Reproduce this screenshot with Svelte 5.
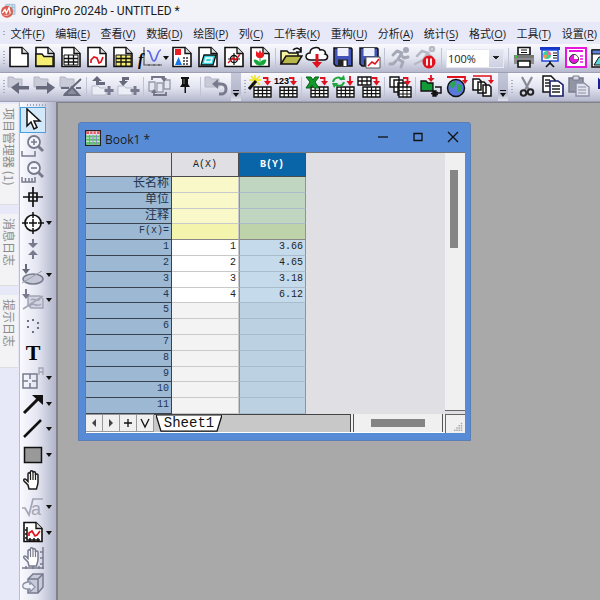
<script>
	const page = '<path d="M3 1.5h12l6 6v13H3z" fill="#fff" stroke="#111" stroke-width="1.6"/><path d="M15 1.5v6h6" fill="#ddd" stroke="#111" stroke-width="1.4"/>';
	const grid = '<path d="M6 12h17v10H6z" fill="#fff" stroke="#111" stroke-width="1.4"/><path d="M6 15.300h17M6 18.700h17M10.200 12v10M14.500 12v10M18.800 12v10" stroke="#111" stroke-width="1.2"/>';
	const drop = '<path d="M15 3h4.500v4" fill="none" stroke="#e0101c" stroke-width="1.800"/><path d="M16 6h7l-3.500 4.500z" fill="#e0101c"/>';
	const folder = '<path d="M1 2h5l2 2h7v8H1z" fill="#c9ccd8" stroke="#b2b5c4"/>';
	const lens = '<circle cx="13" cy="8" r="6" fill="#f4f5fc" stroke="#777b8d" stroke-width="1.800"/><path d="M17 12l5 5" stroke="#777b8d" stroke-width="3"/>';
	const hand = '<path d="M8 20l-1-4-4-4c-1-2 1-2.500 2-1.500l2 2V5c0-1.800 2.300-1.800 2.300 0v-2c0-1.800 2.700-1.800 2.700 0v1c0-1.800 2.500-1.500 2.500 0v2c0-1.500 2.500-1.500 2.500 0v7c0 3-1 4-1.500 7z" fill="#fff" stroke="currentColor" stroke-width="1.5"/><path d="M9.500 5v6M12 4v7M14.500 5v6" stroke="currentColor" stroke-width="1.200"/>';
	const floppy = '<path d="M3 2h17l1 1v17H5l-2-2z" fill="#4355b8" stroke="#111" stroke-width="1.500"/><path d="M6.500 2h11v8h-11z" fill="#eef0fa"/><path d="M7 13.500h10V20H7z" fill="#222"/><path d="M12.500 14.500h3V20h-3z" fill="#fff"/>';
	const chart = '<path d="M6 17v-3l3-3 3 1 2 5 2-1 2-5" fill="none" stroke="#e0101c" stroke-width="1.700"/>';

	const icons = {
		logo: '<path d="M7 2h14v15H7z" fill="#c9dfed" stroke="#8fb3cb"/><path d="M7 7h14M7 12h14M12 2v15M17 2v15" stroke="#8fb3cb"/><circle cx="9" cy="13" r="9" fill="#d95b50"/><path d="M2 15l4-5 2 5 4-8 2 9" fill="none" stroke="#fff" stroke-width="2"/><path d="M4 18c5 2 9 0 11-4" fill="none" stroke="#f6b6aa" stroke-width="1.5"/>',
		blank: page,
		newFolder: page + '<path d="M3 8h6l2 2.500h9V20H3z" fill="#f5ee72" stroke="#111" stroke-width="1.300"/>',
		newBook: page + '<path d="M5 9h14v10H5z" fill="#fff" stroke="#111"/><path d="M5 12.500h14M5 16h14M9.500 9v10M14.500 9v10" stroke="#111" stroke-width="1.300"/>',
		newGraph: page + chart,
		newMatrix: page + '<path d="M5 9h15v11H5z" fill="#f5ee72" stroke="#111"/><path d="M5 12.500h15M5 16h15M10 9v11M15 9v11" stroke="#111" stroke-width="1.300"/>',
		func: '<path d="M6 1v18h18M5 5h2M5 9h2M11 18v2M16 18v2M21 18v2" fill="none" stroke="#555" stroke-width="1.200"/><text x="0" y="19" font-family="Liberation Serif,serif" font-style="italic" font-weight="bold" font-size="16">f</text><path d="M9 5c4-2 4 10 7 10s3-11 7-11" fill="none" stroke="#5968e8" stroke-width="1.700"/>',
		layout: page + '<path d="M5 3h6v6H5z" fill="#ee1c24"/><path d="M5 19l3.500-8 3.500 8z" fill="#1677e8"/><path d="M13 12h6M13 15h6M13 18h6M14 11v8M17 11v8" stroke="#333" stroke-dasharray="2 1"/>',
		notes: page + '<path d="M8 9h12l-3 10H5z" fill="#38d5df" stroke="#111" stroke-width="1.300"/><path d="M10 12h6l-1 4H9z" fill="none" stroke="#fff" stroke-width="1.500"/>',
		digitize: page + '<circle cx="12" cy="13" r="3.500" fill="none" stroke="#111" stroke-width="1.300"/><path d="M12 7v12M6 13h12" stroke="#111" stroke-width="1.200"/><path d="M6 17l5-5 3 2 4-6" fill="none" stroke="#e0101c" stroke-width="1.400"/>',
		image: page + '<path d="M12 12v8M12 19c-4 0-5-2-6-5 4 0 5 2 6 4 1-3 2-4 6-4-1 4-2 5-6 5z" fill="#13a538" stroke="#13a538"/><path d="M8 5l2.500 2L12 4l1.500 3L16 5v5l-2 2h-4l-2-2z" fill="#ee1c24"/>',
		open: '<path d="M2 18V5h6l2 2h9v3" fill="#f7f3a0" stroke="#111" stroke-width="1.500"/><path d="M2 18l5-8h16l-5 8z" fill="#b8b74a" stroke="#111" stroke-width="1.500"/><path d="M14 4c3-3 6-2 8 1M22 1v5h-5" fill="none" stroke="#111" stroke-width="1.600"/>',
		cloud: '<path d="M6 14c-7 0-6-7-1-7 0-6 9-7 10-3 5-1 6 3 5 4 4 1 3 6-1 6z" fill="#fff" stroke="#111" stroke-width="1.500"/><path d="M10.500 8h3v8H17l-5 6-5-6h3.500z" fill="#e0101c"/>',
		save: floppy,
		saveTpl: floppy + '<path d="M9 11h14v11H9z" fill="#fff" stroke="#555"/><path d="M11 20l4-4 3 2 4-5" fill="none" stroke="#e0101c" stroke-width="1.600"/>',
		run: '<g fill="none" stroke="#a5a8b5" stroke-width="3" stroke-linecap="round" stroke-linejoin="round"><circle cx="18" cy="4" r="1.500"/><path d="M5 9l4-4 5 2-4 6 5 3-2 5M13 9l3 3 4-1M8 15l-3 3H2"/></g>',
		pause: '<g fill="none" stroke="#b7b9c4" stroke-width="2.500" stroke-linecap="round"><circle cx="18" cy="3" r="2"/><path d="M3 10l5-5 6 2-5 7-8 4M14 8l4 3"/></g><circle cx="15" cy="16" r="6.500" fill="#e0101c"/><path d="M13 12.500v7M17 12.500v7" stroke="#fff" stroke-width="1.800"/>',
		print: '<path d="M2 9h20v9H2z" fill="#8b8d91"/><path d="M6 1.500h12V9H6zM6 15h12v6H6z" fill="#fff" stroke="#111" stroke-width="1.600"/><path d="M9 4h6M9 6.500h6" stroke="#111"/><path d="M2 9h20v3H2z" fill="#777"/><path d="M3 9.500h2v2H3z" fill="#1ee51e"/>',
		slides: '<path d="M2 1h20v3H2z" fill="#1736c4"/><path d="M4 4h16v11H4z" fill="#fff" stroke="#1f48e0" stroke-width="1.500"/><circle cx="9" cy="9" r="4" fill="#3fcf9b"/><path d="M9 9V5a4 4 0 0 1 4 4z" fill="#f69"/><path d="M9 9H5a4 4 0 0 0 3 4z" fill="#f93"/><path d="M15 7h4M15 9.500h4M15 12h4" stroke="#111"/><path d="M12 15v3M8 21l4-4 4 4" fill="none" stroke="#111" stroke-width="1.600"/>',
		themes: '<path d="M2 2h20v19H2z" fill="#fff" stroke="#e815dd" stroke-width="2"/><path d="M5 5h14" stroke="#e815dd" stroke-width="2"/><circle cx="10" cy="13" r="4.500" fill="#e815dd" stroke="#333"/><path d="M10 13V9a4 4 0 0 1 4 4z" fill="#fff"/><path d="M16 10h3M16 13h3M16 16h3" stroke="#e815dd" stroke-width="1.500"/>',
		panel: '<path d="M2 4h20v17H2z" fill="#fff" stroke="#111" stroke-width="1.500"/><path d="M2 4h20v4H2z" fill="#5c81de" stroke="#111"/><path d="M4 19l5-8h13v8z" fill="#57d6dc" stroke="#111"/>',
		back: folder + '<path d="M12 7v4h10v3.500H12V19l-8-6.500z" fill="#666a7c"/>',
		forward: folder + '<path d="M14 7v4H3v3.500h11V19l8-6.500z" fill="#666a7c"/>',
		noFolder: folder + '<path d="M2 13h8M17 13h5M6 20h14l-7-8zM5 20L22 4" stroke="#666a7c" stroke-width="2" fill="#8a8d9b"/>',
		up: '<path d="M2 11h6l2 2h6v7H2z" fill="#eceef5" stroke="#b9bccb"/><path d="M7 1L2 6h4v4h9V7H9V6h3z" fill="#666a7c"/><path d="M19 11v9M14.500 15.500h9" stroke="#777b8d" stroke-width="3"/>',
		down: '<path d="M2 11h6l2 2h6v7H2z" fill="#eceef5" stroke="#b9bccb"/><path d="M13 2H6v4H3l4 5 5-5H9V5h4z" fill="#666a7c"/><path d="M19 11v9M14.500 15.500h9" stroke="#777b8d" stroke-width="3"/>',
		refresh: '<path d="M2 7h6v9H2zM10 8h6v9h-6zM17 5h6v9h-6z" fill="#e5e7f0" stroke="#969aab" stroke-width="1.300"/><path d="M5 5V2h12v3M19 17v3H7v-3" fill="none" stroke="#717587" stroke-width="1.800"/><path d="M14 3h6l-3 4zM4 18l3-4 3 4z" fill="#717587"/>',
		pin: '<path d="M8 2h8v2h-1v5l2 3h-4v6h-1.500v-6H7l2-3V4H8z" fill="#111"/><path d="M11 4v5" stroke="#777"/>',
		undo: folder + '<path d="M12 9h5c4 0 5 2 5 5s-2 5-4 5h-3" fill="none" stroke="#777b8d" stroke-width="3"/><path d="M14 4v10L8 9z" fill="#777b8d"/>',
		wand: grid + drop + '<path d="M7 0v11M1 5h12M3 1l9 9M12 1L3 9" stroke="#efe51a" stroke-width="1.500"/><path d="M1 14l7-8" stroke="#111" stroke-width="3"/>',
		numbers: grid + drop + '<text x="0" y="9" font-family="Liberation Sans,sans-serif" font-weight="bold" font-size="9">123</text>',
		excel: grid + drop + '<path d="M1 2h5l2 3 2-3h4l-4 5 4 6h-5l-2-3-2 3H1l4-6z" fill="#129a28" stroke="#06621a"/>',
		recalc: grid + '<path d="M2 7c1-5 7-6 9-2M13 7c-1 4-6 5-9 2" fill="none" stroke="#20a640" stroke-width="2"/><path d="M8 5h6l-1-5zM7 8H1l2 5z" fill="#20a640"/><path d="M19 1v7" stroke="#e0101c" stroke-width="1.800"/><path d="M15.500 6h7L19 11z" fill="#e0101c"/>',
		transpose: grid + '<path d="M1 2h13v8H1z" fill="#fff" stroke="#111" stroke-width="1.400"/><path d="M1 6h13M5 2v8M10 2v8" stroke="#111" stroke-width="1.300"/>' + drop,
		copies: '<path d="M2 2h9v10H2zM6 5h9v12H6zM10 8h9v12h-9z" fill="#fff" stroke="#111" stroke-width="1.400"/><path d="M11 12h12v10H11z" fill="#fff" stroke="#111" stroke-width="1.400"/><path d="M11 15.500h12M11 19h12M15 12v10M19 12v10" stroke="#111"/>' + drop,
		connect: '<path d="M2 6h5l2 2h5v8H2z" fill="#129a38" stroke="#111" stroke-width="1.300"/><path d="M12 0v4" stroke="#e0101c" stroke-width="1.800"/><path d="M8.500 3h7L12 7z" fill="#e0101c"/><path d="M16 12h6v6h-4" fill="none" stroke="#111" stroke-width="1.500"/><path d="M14 16h3v5h-3zM12 18.500h2M17 17.500h2M17 19.500h2" fill="#111" stroke="#111" stroke-width="1.400"/>',
		globe: '<circle cx="11" cy="13" r="8.500" fill="#5b78dc" stroke="#111" stroke-width="1.500"/><path d="M5 8l5-2 1 3-3 4-2 1zM12 9l5 1 0 4-3 4-2-4z" fill="#2aa748"/><path d="M2 2h18v4" fill="none" stroke="#e0101c" stroke-width="1.800"/><path d="M17 5h6l-3 4z" fill="#e0101c"/>',
		files: '<path d="M2 4h6l2 2v9H2zM7 7h6l2 2v9H7zM12 10h6l2 2v9h-8z" fill="#fff" stroke="#111" stroke-width="1.500"/><path d="M2 1h18v5" fill="none" stroke="#e0101c" stroke-width="1.600"/><path d="M17 5h6l-3 4z" fill="#e0101c"/>',
		cut: '<path d="M7 2l7 13M17 2l-7 13" stroke="#888b95" stroke-width="2.200"/><circle cx="8.500" cy="18" r="2.800" fill="none" stroke="#222" stroke-width="2"/><circle cx="15.500" cy="17" r="2.800" fill="none" stroke="#222" stroke-width="2"/>',
		copy: '<path d="M2 1h8l4 4v12H2z" fill="#fff" stroke="#111" stroke-width="1.500"/><path d="M9 6h8l5 4v11H9z" fill="#fff" stroke="#171e68" stroke-width="1.600"/><path d="M4 5h5M4 8h5M4 11h5M11 11h8M11 14h8M11 17h8" stroke="#222" stroke-width="1.300"/>',
		paste: '<path d="M2 3h14v14H2z" fill="#9295a3" stroke="#777b8d" stroke-width="1.500"/><path d="M6 1h6v4H6z" fill="#d8dae4" stroke="#777b8d"/><path d="M9 8h8l5 4v9H9z" fill="#dfe2ed" stroke="#8c90a4" stroke-width="1.400"/><path d="M11 12h8M11 15h8M11 18h8" stroke="#8c90a4"/>',
		revert: '<path d="M6 5v8h8zM9 8c5-5 12-2 13 6" fill="#1a2099" stroke="#1a2099" stroke-width="2"/>',
		arrow: '<path d="M6 1v17l4-4 3 7 3-1.500-3-6.500h6z" fill="#fff" stroke="#111" stroke-width="1.500"/>',
		zoomIn: lens + '<path d="M10 8h6M13 5v6" stroke="#777b8d" stroke-width="1.600"/><path d="M1 17v5h13v-5" fill="none" stroke="#777b8d" stroke-width="1.500"/>',
		zoomOut: lens + '<path d="M10 8h6" stroke="#777b8d" stroke-width="1.600"/><path d="M1 17v5h13v-5M4.500 18v4M8 18v4M11 18v4" fill="none" stroke="#777b8d" stroke-width="1.500"/>',
		reader: '<path d="M12 2v20M2 12h20M8 8h8v8H8z" fill="none" stroke="#111" stroke-width="1.700"/>',
		target: '<circle cx="12" cy="12" r="8" fill="#fff" stroke="#111" stroke-width="1.700"/><path d="M12 1v6M12 17v6M1 12h6M17 12h6M8 12h8M12 8v8" stroke="#111" stroke-width="1.500"/>',
		squeeze: '<path d="M12 2v6M12 22v-6" stroke="#777b8d" stroke-width="2"/><path d="M7 6h10l-5 5zM7 18h10l-5-5z" fill="#777b8d"/>',
		mask: '<ellipse cx="12" cy="16" rx="10" ry="5" fill="#c4c7d6" stroke="#777b8d" stroke-width="1.500"/><path d="M1 20L21 8" stroke="#9a9dad"/><path d="M5 1v7" stroke="#666a7c" stroke-width="2"/><path d="M1 6h8l-4 5z" fill="#666a7c"/>',
		region: '<path d="M7 8h12l3 3v9H10l-3-3zM10 12c3-3 6 3 9-1M9 18c3-5 7 2 11-2M2 21L22 8" fill="#d0d3e0" stroke="#a2a5b6" stroke-width="1.500"/><path d="M5 1v7" stroke="#777b8d" stroke-width="2"/><path d="M1 6h8l-4 5z" fill="#777b8d"/>',
		dots: '<path d="M6 6h2v2H6zM11 5h2v2h-2zM16 8h2v2h-2zM6 12h2v2H6zM16 13h2v2h-2zM11 17h2v2h-2z" fill="#6d7080"/>',
		text: '<text x="12" y="20" text-anchor="middle" font-family="Liberation Serif,serif" font-weight="bold" font-size="22">T</text>',
		note: '<path d="M2 8h14v14H2zM9 8v5M9 17v5M2 15h5M11 15h5" fill="none" stroke="#777b8d" stroke-width="1.500"/><path d="M18 9V2h4v7M18 6h4" fill="none" stroke="#a2a5b6" stroke-width="1.300"/>',
		arrowLine: '<path d="M3 21L17 7" stroke="#111" stroke-width="3"/><path d="M11 3h11v10z" fill="#111"/>',
		line: '<path d="M3 20L20 3" stroke="#111" stroke-width="2.500"/>',
		rect: '<path d="M3.500 4.500h17v15h-17z" fill="#999" stroke="#111" stroke-width="1.500"/>',
		hand: hand,
		root: '<path d="M1 13h3l4 7L12 4h10" fill="none" stroke="#a2a5b6" stroke-width="1.700"/><text x="10" y="20" font-family="Liberation Sans,sans-serif" font-size="18" fill="#a2a5b6">a</text>',
		graph: page + '<path d="M6 6v13h13M4 9h2M4 13h2M4 17h2M9 17v3M13 17v3M17 17v3" fill="none" stroke="#111" stroke-width="1.500"/><path d="M8 15v-3l3-2 3 5 2-1 3-4" fill="none" stroke="#e0101c" stroke-width="1.700"/>',
		pan: '<g color="#777b8d">' + hand + '</g><path d="M22 1v22M1 22h22M19 6h3M19 12h3M19 18h3M5 20v3M12 20v3M18 20v3" stroke="#777b8d" stroke-width="1.500"/>',
		cube: '<path d="M7 7l5-5h10v13l-5 6H7zM7 7h10v14M17 7l5-5" fill="#c7cad9" stroke="#777b8d" stroke-width="1.500"/><path d="M7 10c-7 1-7 7 0 7h2v3l5-5-5-5v3" fill="#eef0f8" stroke="#8c90a4" stroke-width="1.300"/>',
		sheet: '<path d="M1 1h22v22H1z" fill="#fff" stroke="#222" stroke-width="2"/><path d="M2 2h20v5H2z" fill="#e8555c"/><path d="M2 8h20v14H2z" fill="#55c75d"/><path d="M2 7h20M2 12h20M2 17h20M7 2v20M12 2v20M17 2v20" stroke="#eef" stroke-width="1.500"/><path d="M7 7v15M12 7v15M17 7v15" stroke="#444a98"/>',
	};

	const menus = [
		['文件', 'F'], ['编辑', 'E'], ['查看', 'V'], ['数据', 'D'], ['绘图', 'P'], ['列', 'C'], ['工作表', 'K'],
		['重构', 'U'], ['分析', 'A'], ['统计', 'S'], ['格式', 'O'], ['工具', 'T'], ['设置', 'R'],
	];
	// '|' is a separator, ' v' marks a button with a drop-down arrow
	const fileTools = ['blank', 'newFolder', 'newBook', 'newGraph', 'newMatrix', 'func v', 'layout', 'notes', 'digitize', 'image', '|', 'open', 'cloud', 'save', 'saveTpl', '|', 'run', 'pause', '|'];
	const viewTools = ['|', 'print', 'slides', 'themes', 'panel'];
	const folderTools = ['back', 'forward', 'noFolder', '|', 'up', 'down', '|', 'refresh', 'pin', '|', 'undo'];
	const importTools = ['wand', 'numbers', '|', 'excel', 'recalc', 'transpose', '|', 'copies', '|', 'connect', 'globe', 'files'];
	const editTools = ['cut', 'copy', 'paste', 'revert'];
	const drawTools = ['arrow', 'zoomIn', 'zoomOut', 'reader', 'target v', 'squeeze', 'mask v', 'region v', 'dots', 'text', 'note v', 'arrowLine v', 'line v', 'rect v', 'hand', 'root v', 'graph v', 'pan', 'cube'];
	const sideTabs = ['项目管理器 (1)', '消息日志', '提示日志'];

	const labels = ['长名称', '单位', '注释', 'F(x)='];
	const data = [['1', '3.66'], ['2', '4.65'], ['3', '3.18'], ['4', '6.12']];
	const rows = Array.from({ length: 11 }, (_, i) => data[i] ?? ['', '']);

	let zoom = $state('100%');
	let tool = $state('arrow');
</script>

{#snippet icon(name)}
	<svg viewBox="0 0 24 24" aria-hidden="true">{@html icons[name]}</svg>
{/snippet}

{#snippet tools(list)}
	{#each list as item}
		{#if item === '|'}
			<i class="sep"></i>
		{:else}
			{@const [name, menu] = item.split(' ')}
			<button class="tool" class:wide={menu} aria-label={name}>
				{@render icon(name)}
				{#if menu}<span class="caret"></span>{/if}
			</button>
		{/if}
	{/each}
{/snippet}

<div class="app">
	<header class="title">
		{@render icon('logo')}
		<span>OriginPro 2024b - UNTITLED *</span>
	</header>

	<nav class="menu">
		<i class="grip"></i>
		{#each menus as [name, key]}
			<button>{name}(<u>{key}</u>)</button>
		{/each}
	</nav>

	<div class="bar">
		<i class="grip"></i>
		{@render tools(fileTools)}
		<select class="zoom" aria-label="zoom" bind:value={zoom}>
			<option>100%</option>
			<option>200%</option>
		</select>
		{@render tools(viewTools)}
	</div>

	<div class="bar">
		<i class="grip"></i>
		{@render tools(folderTools)}
		<button class="more" aria-label="more"><span class="caret"></span></button>
		<i class="grip"></i>
		{@render tools(importTools)}
		<button class="more" aria-label="more"><span class="caret"></span></button>
		<i class="grip"></i>
		{@render tools(editTools)}
	</div>

	<div class="body">
		<aside class="tabs">
			{#each sideTabs as tab}
				<button>{tab}</button>
			{/each}
		</aside>

		<div class="draw">
			<i class="handle"></i>
			{#each drawTools as item}
				{@const [name, menu] = item.split(' ')}
				<button class:active={tool === name} aria-label={name} onclick={() => (tool = name)}>
					<span class="face">{@render icon(name)}</span>
					{#if menu}<span class="caret"></span>{/if}
				</button>
			{/each}
		</div>

		<main>
			<section class="book">
				<div class="caption">
					{@render icon('sheet')}
					<span>Book1 *</span>
					<button aria-label="minimize"><svg viewBox="0 0 12 12"><path d="M1 6h10" /></svg></button>
					<button aria-label="maximize"><svg viewBox="0 0 12 12"><path d="M2 2.500h8v7H2z" /></svg></button>
					<button aria-label="close"><svg viewBox="0 0 12 12"><path d="M1 1l10 10M11 1L1 11" /></svg></button>
				</div>
				<div class="content">
					<div class="sheet">
						<table>
							<thead>
								<tr><th></th><th>A(X)</th><th class="sel">B(Y)</th></tr>
							</thead>
							<tbody>
								{#each labels as label}
									<tr class="meta"><th>{label}</th><td></td><td class="sel"></td></tr>
								{/each}
								{#each rows as [a, b], i}
									<tr class:empty={!a}><th>{i + 1}</th><td>{a}</td><td class="sel">{b}</td></tr>
								{/each}
							</tbody>
						</table>
					</div>
					<div class="vscroll"><i></i></div>
					<div class="foot">
						<button aria-label="previous"><svg viewBox="0 0 12 12"><path class="solid" d="M8 2v8L4 6z" /></svg></button>
						<button aria-label="next"><svg viewBox="0 0 12 12"><path class="solid" d="M4 2v8l4-4z" /></svg></button>
						<button aria-label="add"><svg viewBox="0 0 12 12"><path d="M6 2v8M2 6h8" /></svg></button>
						<button aria-label="list"><svg viewBox="0 0 12 12"><path d="M2 2l4 8 4-8" /></svg></button>
						<div class="strip">
							<button class="sheet-tab">
								<svg viewBox="0 0 66 18" preserveAspectRatio="none"><path d="M0 0l5 17h56l5-17z" /></svg>
								<span>Sheet1</span>
							</button>
						</div>
						<div class="hscroll"><i></i></div>
					</div>
					<div class="corner">
						<svg viewBox="0 0 12 12"><path d="M9 1h2v2H9zM6 4h2v2H6zM9 4h2v2H9zM3 7h2v2H3zM6 7h2v2H6zM9 7h2v2H9zM0 10h2v2H0zM3 10h2v2H3zM6 10h2v2H6zM9 10h2v2H9z" /></svg>
					</div>
				</div>
			</section>
		</main>
	</div>
</div>

<style>
	:global(body) {
		overflow: hidden;
	}
	.app {
		height: 100vh;
		display: flex;
		flex-direction: column;
		background: #e7e9f9;
		font: 12px Roboto, "Noto Sans CJK SC", sans-serif;
		color: #1c1c1c;
	}
	button {
		border: 0;
		padding: 0;
		background: none;
		font: inherit;
		color: inherit;
	}
	.title {
		height: 22px;
		flex: none;
		display: flex;
		align-items: center;
		gap: 4px;
		padding-left: 1px;
		background: #f1f3f8;
	}
	.title svg {
		width: 16px;
		height: 18px;
	}
	.menu {
		height: 22px;
		flex: none;
		display: flex;
		align-items: center;
		justify-content: space-between;
		padding: 0 3px 0 2px;
		white-space: nowrap;
		font: 11px "Open Sans", "Noto Sans CJK SC", sans-serif;
	}
	.menu .grip {
		height: 5px;
		margin-right: -5px;
	}
	.menu button {
		flex: none;
	}
	u {
		text-underline-offset: 2px;
	}
	.grip {
		flex: none;
		width: 2px;
		height: 14px;
		margin: 0 1px;
		background: repeating-linear-gradient(#a9adbf 0 1px, transparent 1px 3px);
	}
	.bar {
		height: 28px;
		flex: none;
		display: flex;
		align-items: center;
		padding-left: 2px;
		overflow: hidden;
		background: linear-gradient(#f9f9fd, #e3e5f1 50%, #b6b9cd);
		border-bottom: 1px solid #9da0b5;
	}
	.tool {
		flex: none;
		width: 26px;
		height: 24px;
	}
	.tool svg {
		width: 24px;
		height: 24px;
		display: block;
		margin: 0 auto;
	}
	.wide {
		width: 33px;
		display: flex;
		align-items: center;
	}
	.caret {
		flex: none;
		border: 3px solid transparent;
		border-top: 4px solid #111;
		border-bottom: 0;
	}
	.sep {
		flex: none;
		width: 1px;
		height: 20px;
		margin: 0 2px;
		background: #c0c3d3;
	}
	.zoom {
		appearance: none;
		flex: none;
		width: 58px;
		height: 19px;
		margin: 0 2px;
		padding: 0 1px;
		border: 1px solid #e6e8f2;
		border-radius: 0;
		font: 11px "Open Sans", sans-serif;
		color: #222;
		background-color: #fff;
		background-image: linear-gradient(to bottom left, #222 50%, transparent 50%), linear-gradient(to bottom right, #222 50%, transparent 50%), linear-gradient(#e3e5f0, #cdd0df);
		background-size: 3px 4px, 3px 4px, 14px 100%;
		background-position: right 7px center, right 4px center, right;
		background-repeat: no-repeat;
	}
	.more {
		flex: none;
		align-self: stretch;
		width: 10px;
		margin: 0 2px;
		display: flex;
		flex-direction: column;
		align-items: center;
		justify-content: end;
		gap: 2px;
		padding-bottom: 4px;
		background: linear-gradient(#c5c8d9, #b5b8cc 70%, #dfe1eb);
	}
	.more::before {
		content: "";
		width: 6px;
		height: 1px;
		background: #111;
	}
	.body {
		flex: 1;
		min-height: 0;
		display: flex;
	}
	.tabs {
		width: 19px;
		flex: none;
		display: flex;
		flex-direction: column;
		gap: 9px;
		padding-top: 2px;
	}
	.tabs button {
		writing-mode: vertical-rl;
		text-orientation: sideways;
		width: 18px;
		padding: 4px 0 19px;
		text-align: left;
		background: #f3f3f5;
		border-bottom: 1px solid #ddd;
		color: #8c8c8c;
		font-family: "Noto Sans CJK SC", sans-serif;
		line-height: 17px;
	}
	.draw {
		width: 37px;
		flex: none;
		box-sizing: border-box;
		display: flex;
		flex-direction: column;
		padding: 2px 0 3px;
		border-left: 1px solid #b9bdd4;
		background: linear-gradient(90deg, #fafaff, #e2e4f0 50%, #b1b4ca);
	}
	.handle {
		height: 2px;
		margin: 0 9px 1px 7px;
		background: repeating-linear-gradient(90deg, #a2a6ba 0 1px, transparent 1px 3px);
	}
	.draw button {
		flex: 1;
		min-height: 0;
		display: flex;
		align-items: center;
	}
	.draw .face {
		flex: none;
		width: 26px;
		height: 100%;
		box-sizing: border-box;
		border: 1px solid transparent;
		display: flex;
		align-items: center;
		justify-content: center;
	}
	.draw .active .face {
		background: #d3e8f8;
		border-color: #4a9fdc;
	}
	.draw svg {
		width: 24px;
		height: 24px;
		flex: none;
	}
	main {
		flex: 1;
		position: relative;
		overflow: hidden;
		background: #a9a9a9;
		border: 2px solid #808287;
		border-width: 1px 0 0 2px;
	}
	.book {
		position: absolute;
		left: 20px;
		top: 19px;
		width: 393px;
		height: 319px;
		box-sizing: border-box;
		display: flex;
		flex-direction: column;
		padding: 0 5px 7px 6px;
		border: 1px solid #5b7eb5;
		border-radius: 3px 3px 0 0;
		background: #588bd6;
	}
	.caption {
		height: 29px;
		flex: none;
		display: flex;
		align-items: center;
		padding-top: 1px;
		box-sizing: border-box;
	}
	.caption > svg {
		width: 16px;
		height: 16px;
		margin-right: 4px;
	}
	.caption span {
		flex: 1;
		padding-top: 2px;
		font: 12px "Open Sans", sans-serif;
	}
	.caption button {
		width: 35px;
		height: 24px;
		display: flex;
		align-items: center;
		justify-content: end;
		padding: 0 6px 2px 0;
	}
	.caption button svg,
	.foot svg {
		width: 12px;
		height: 12px;
		display: block;
		fill: none;
		stroke: #111;
		stroke-width: 1.300;
	}
	.content {
		flex: 1;
		min-height: 0;
		display: grid;
		grid-template: 1fr 19px / 1fr 20px;
		border: 1px solid #777;
		border-width: 1px 0 0 1px;
		background: #e0dfe4;
	}
	.sheet {
		min-height: 0;
		overflow: hidden;
	}
	table {
		width: 220px;
		height: 100%;
		table-layout: fixed;
		border-collapse: separate;
		border-spacing: 0;
		font: 10px/14px "Liberation Mono", "Noto Sans CJK SC", monospace;
		color: #222;
	}
	th,
	td {
		padding: 0 2px 0 0;
		text-align: right;
		vertical-align: top;
		font-weight: normal;
		background: #fff;
		border-bottom: 1px solid #c9c9cb;
		border-right: 1px solid #c9c9cb;
	}
	thead th {
		height: 24px;
		box-sizing: border-box;
		padding: 0;
		width: 67px;
		vertical-align: middle;
		text-align: center;
		background: #e0dfe4;
		border-color: #4b4b4f;
	}
	thead th:first-child {
		width: 86px;
	}
	thead .sel {
		background: #0964a8;
		color: #fff;
		font-weight: bold;
	}
	tbody th {
		background: #9cb8d3;
		color: #1f3550;
		border-color: #39434f;
	}
	tbody .sel {
		background: #c5daea;
		border-right: 1px solid #55a1e3;
		border-left: 1px solid #55a1e3;
		border-bottom-color: #a9bccb;
	}
	.meta th {
		font-size: 12px;
	}
	.meta:nth-child(4) th {
		font-size: 10px;
	}
	.meta td {
		background: #f9f8c8;
	}
	.meta .sel {
		background: #c0d6c0;
	}
	.meta:nth-child(4) td {
		background: #f5f4ac;
		border-bottom-color: #888;
	}
	.meta:nth-child(4) .sel {
		background: #bed3aa;
	}
	.empty td {
		background: #f3f3f3;
	}
	.empty .sel {
		background: #bcd2e2;
	}
	.vscroll {
		background: #f0f0f0;
		border-bottom: 1px solid #666;
		margin-bottom: 3px;
	}
	.vscroll i {
		display: block;
		width: 8px;
		height: 78px;
		margin: 17px 0 0 5px;
		background: #858585;
	}
	.foot {
		display: flex;
		background: #f0f0f0;
		border-bottom: 1px solid #fff;
		box-sizing: border-box;
	}
	.foot > button {
		width: 17px;
		flex: none;
		display: grid;
		place-items: center;
		border: 1px solid #999;
		border-width: 1px 1px 1px 0;
	}
	.foot .solid {
		fill: #444;
		stroke: none;
	}
	.strip {
		flex: 1;
		padding-left: 2px;
		display: flex;
		background: #c8c8c8;
		border: 1px solid #444;
		border-width: 1px 1px 0 0;
	}
	.sheet-tab {
		position: relative;
		width: 66px;
		font: 14px/17px "Liberation Mono", monospace;
		color: #111;
	}
	.sheet-tab svg {
		position: absolute;
		inset: 0;
		width: 100%;
		height: 100%;
		fill: #fff;
	}
	.sheet-tab span {
		position: relative;
	}
	.hscroll {
		width: 90px;
		flex: none;
		box-sizing: border-box;
		margin: 0 2px;
		padding: 5px 17px;
		border: 1px solid #555;
		border-width: 0 1px;
	}
	.hscroll i {
		display: block;
		height: 8px;
		background: #858585;
	}
	.corner {
		display: flex;
		align-items: end;
		justify-content: end;
		padding: 2px;
		background: #f0f0f0;
		border: 1px solid #666;
		border-width: 1px 0 0 1px;
	}
	.corner svg {
		width: 9px;
		height: 9px;
		fill: #aaa;
	}
</style>
